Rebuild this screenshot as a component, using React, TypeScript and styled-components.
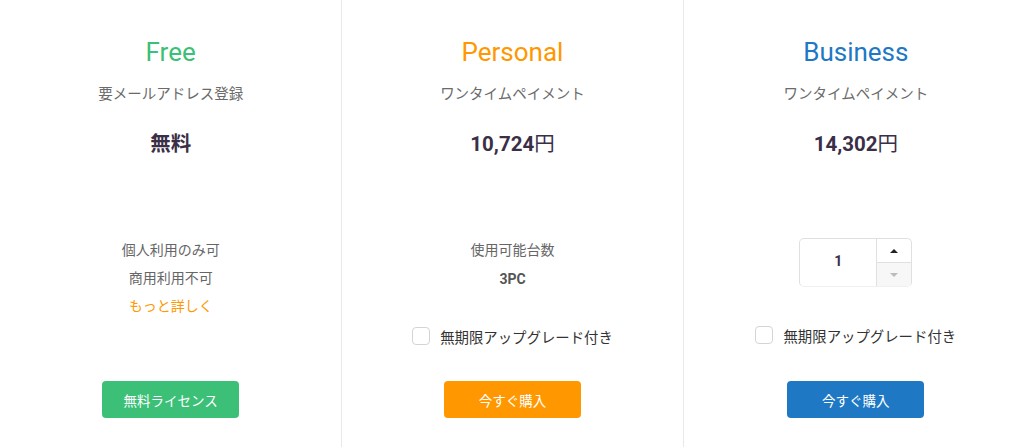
import styled, { createGlobalStyle } from "styled-components";

const GlobalStyle = createGlobalStyle`
  html, body {
    margin: 0;
    padding: 0;
    background: #fff;
  }
  body {
    font-family: Roboto, "Noto Sans CJK JP", sans-serif;
  }
`;

type Plan = {
  name: string;
  color: string;
  note: string;
  price: string;
  yen: boolean;
  button: string;
};

const plans: Plan[] = [
  { name: "Free", color: "#3cbf77", note: "要メールアドレス登録", price: "無料", yen: false, button: "無料ライセンス" },
  { name: "Personal", color: "#ff9800", note: "ワンタイムペイメント", price: "10,724", yen: true, button: "今すぐ購入" },
  { name: "Business", color: "#1e78c4", note: "ワンタイムペイメント", price: "14,302", yen: true, button: "今すぐ購入" },
];

export default function App() {
  return (
    <>
      <GlobalStyle />
      <Pricing>
        {plans.map((plan, i) => (
          <Column key={plan.name} divided={i > 0} shift={i === 2 ? 2 : 0}>
            <Title color={plan.color}>{plan.name}</Title>
            <Note>{plan.note}</Note>
            <Price>
              {plan.price}
              {plan.yen && <Yen>円</Yen>}
            </Price>
            <Middle>
              {i === 0 && (
                <>
                  <Line>個人利用のみ可</Line>
                  <Line>商用利用不可</Line>
                  <MoreLink href="#">もっと詳しく</MoreLink>
                </>
              )}
              {i === 1 && (
                <>
                  <Line>使用可能台数</Line>
                  <Strong>3PC</Strong>
                  <CheckRow top={34}>
                    <Box />
                    <CheckLabel>無期限アップグレード付き</CheckLabel>
                  </CheckRow>
                </>
              )}
              {i === 2 && (
                <>
                  <Spinner>
                    <SpinValue>1</SpinValue>
                    <SpinButtons>
                      <SpinUp>
                        <Arrow up />
                      </SpinUp>
                      <SpinDown>
                        <Arrow />
                      </SpinDown>
                    </SpinButtons>
                  </Spinner>
                  <CheckRow top={40}>
                    <Box />
                    <CheckLabel>無期限アップグレード付き</CheckLabel>
                  </CheckRow>
                </>
              )}
            </Middle>
            <Button color={plan.color}>{plan.button}</Button>
          </Column>
        ))}
      </Pricing>
    </>
  );
}

const Pricing = styled.div`
  display: grid;
  grid-template-columns: repeat(3, 1fr);
  height: 447px;
`;

const Column = styled.div<{ divided: boolean; shift: number }>`
  display: flex;
  flex-direction: column;
  align-items: center;
  padding: 36px 0 29px ${(p) => p.shift * 2}px;
  box-sizing: border-box;
  border-left: ${(p) => (p.divided ? "1px solid #e9e9e9" : "none")};
`;

const Title = styled.h2<{ color: string }>`
  margin: 0;
  font-size: 26px;
  line-height: 32px;
  font-weight: 400;
  color: ${(p) => p.color};
`;

const Note = styled.div`
  margin-top: 17px;
  font-size: 14.5px;
  line-height: 20px;
  color: #6b6b6b;
`;

const Price = styled.div`
  margin-top: 28px;
  font-size: 20.5px;
  line-height: 22px;
  font-weight: 700;
  color: #3b2f47;
`;

const Yen = styled.span`
  font-weight: 400;
`;

const Middle = styled.div`
  margin-top: 81px;
  display: flex;
  flex-direction: column;
  align-items: center;
`;

const Line = styled.div`
  font-size: 14px;
  line-height: 28px;
  color: #666;
`;

const MoreLink = styled.a`
  font-size: 14px;
  line-height: 28px;
  color: #ff9800;
  text-decoration: none;
`;

const Strong = styled.div`
  font-size: 14px;
  line-height: 30px;
  font-weight: 700;
  color: #555;
`;

const CheckRow = styled.label<{ top: number }>`
  margin-top: ${(p) => p.top - 2}px;
  display: flex;
  align-items: center;
  gap: 10px;
  height: 20px;
`;

const Box = styled.span`
  width: 18px;
  height: 18px;
  border: 1px solid #d4d4d4;
  border-radius: 4px;
  box-sizing: border-box;
  background: #fff;
`;

const CheckLabel = styled.span`
  font-size: 14.4px;
  color: #333;
`;

const Spinner = styled.div`
  margin-top: 2px;
  width: 113px;
  height: 49px;
  display: flex;
  border: 1px solid #e0e0e0;
  border-bottom-color: #f0f0f0;
  border-radius: 5px;
  box-sizing: border-box;
  overflow: hidden;
`;

const SpinValue = styled.div`
  flex: 1;
  display: flex;
  align-items: center;
  justify-content: center;
  padding-bottom: 3px;
  font-size: 14px;
  font-weight: 700;
  color: #3b2f47;
`;

const SpinButtons = styled.div`
  width: 34px;
  display: flex;
  flex-direction: column;
  border-left: 1px solid #e0e0e0;
`;

const SpinUp = styled.div`
  flex: 1;
  display: flex;
  align-items: center;
  justify-content: center;
  border-bottom: 1px solid #e0e0e0;
`;

const SpinDown = styled(SpinUp)`
  border-bottom: none;
  background: #f7f7f7;
`;

const Arrow = styled.span<{ up?: boolean }>`
  width: 0;
  height: 0;
  border-left: 4px solid transparent;
  border-right: 4px solid transparent;
  ${(p) =>
    p.up
      ? "border-bottom: 4px solid #222;"
      : "border-top: 4px solid #bbb;"}
`;

const Button = styled.button<{ color: string }>`
  margin-top: auto;
  width: 137px;
  height: 37px;
  border: none;
  border-radius: 4px;
  background: ${(p) => p.color};
  color: #fff;
  font-family: Roboto, "Noto Sans CJK JP", sans-serif;
  font-size: 13.5px;
  cursor: pointer;
`;
